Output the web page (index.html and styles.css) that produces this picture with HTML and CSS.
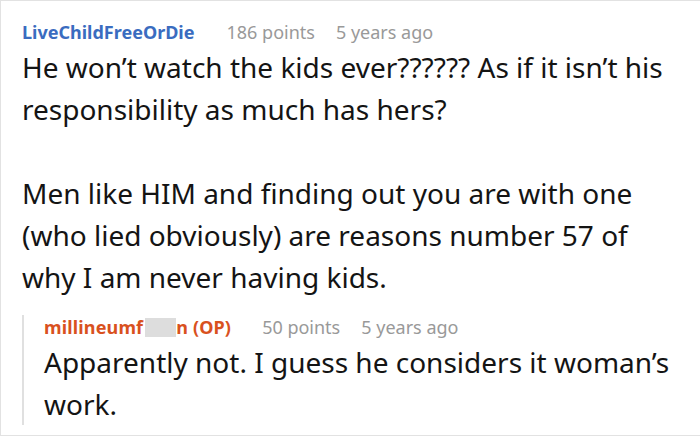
FILE: index.html
```html
<!DOCTYPE html>
<html>
<head>
<meta charset="utf-8">
<link rel="stylesheet" href="styles.css">
</head>
<body>
<div class="frame">
  <div class="comment">
    <div class="meta">
      <span class="user">LiveChildFreeOrDie</span>
      <span class="points">186 points</span>
      <span class="time">5 years ago</span>
    </div>
    <div class="text">
      <p>He won’t watch the kids ever?????? As if it isn’t his responsibility as much has hers?</p>
      <p>Men like HIM and finding out you are with one (who lied obviously) are reasons number 57 of why I am never having kids.</p>
    </div>
    <div class="reply">
      <div class="meta">
        <span class="user op">millineumf<span class="redact"></span>n (OP)</span>
        <span class="points">50 points</span>
        <span class="time">5 years ago</span>
      </div>
      <div class="text">
        <p>Apparently not. I guess he considers it woman’s work.</p>
      </div>
    </div>
  </div>
</div>
</body>
</html>
```

FILE: styles.css
```css
html, body {
  margin: 0;
  padding: 0;
  background: #ffffff;
}
.frame {
  width: 700px;
  height: 436px;
  box-sizing: border-box;
  border: 1px solid #e2e2e2;
  border-right: none;
  overflow: hidden;
  font-family: "Noto Sans", sans-serif;
}
.comment {
  padding: 19px 28px 0 21px;
}
.meta {
  display: flex;
  align-items: center;
  height: 24px;
  font-size: 18px;
  line-height: 24px;
  white-space: nowrap;
}
.user {
  font-weight: 700;
  color: #3a6cc0;
  margin-right: 32px;
}
.user.op {
  color: #d9511e;
  margin-right: 31px;
  letter-spacing: 0.15px;
}
.redact {
  display: inline-block;
  width: 31px;
  height: 19px;
  margin-left: 2px;
  background: #dddddd;
  vertical-align: -3px;
}
.points {
  color: #999999;
  margin-right: 21px;
}
.time {
  color: #999999;
}
.text {
  color: #141414;
  font-size: 28px;
  line-height: 42px;
  margin-top: 2px;
}
.text p {
  margin: 0 0 42px 0;
}
.text p:last-child {
  margin-bottom: 0;
}
.reply {
  margin-top: 17px;
  border-left: 2px solid #e0e0e0;
  padding-left: 20px;
}
```
